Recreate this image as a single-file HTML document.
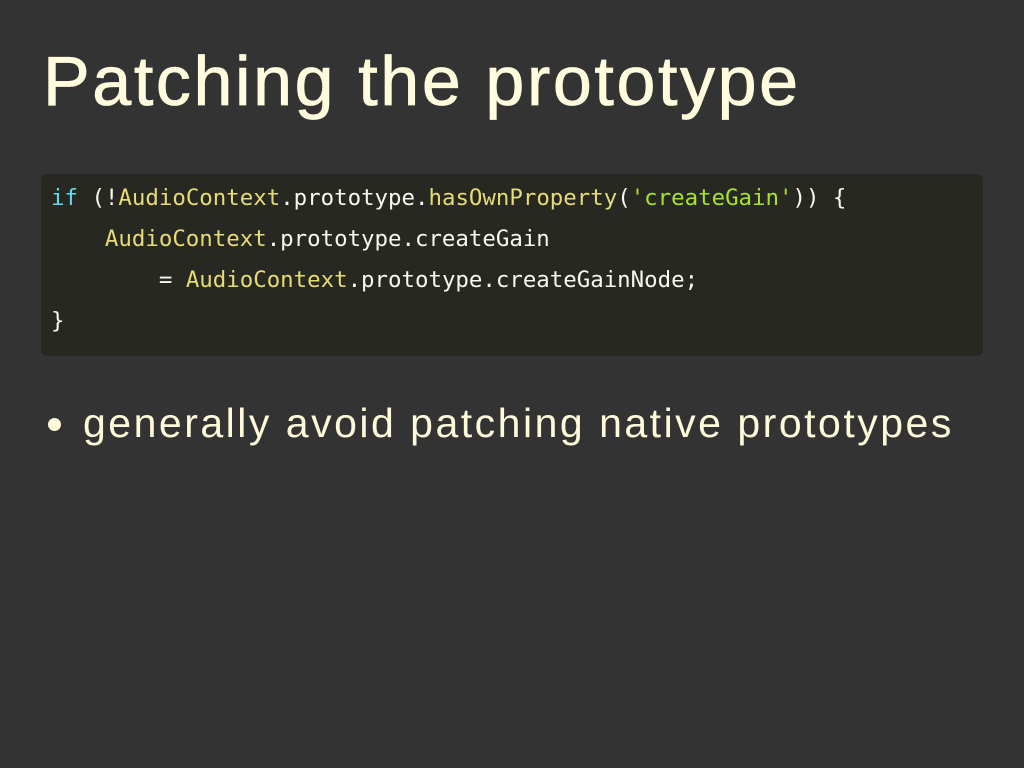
<!DOCTYPE html>
<html><head><style>
html,body{margin:0;padding:0;}
body{width:1024px;height:768px;background:#333333;position:relative;overflow:hidden;font-family:"Liberation Sans",sans-serif;color:#fdf9d9;}
h1{position:absolute;left:43px;top:36px;margin:0;font-size:70px;font-weight:normal;letter-spacing:2.6px;line-height:90px;color:#fffbdc;-webkit-text-stroke:0.8px #fffbdc;}
.code{position:absolute;left:41px;top:174px;width:942px;height:182px;background:#272822;border-radius:6px;}
pre{margin:0;position:absolute;left:10px;top:4px;font-family:"DejaVu Sans Mono","Liberation Mono",monospace;font-size:22.4px;line-height:41px;color:#f8f8f2;}
.k{color:#66d9ef}.y{color:#e6db74}.g{color:#a6e22e}
.b{position:absolute;left:48px;top:398px;font-size:41px;line-height:50px;}
.b span{position:absolute;left:35px;white-space:nowrap;letter-spacing:2.5px;}
.dot{position:absolute;left:0;top:20px;width:13px;height:13px;border-radius:50%;background:#fdf9d9;}
</style></head><body>
<h1>Patching the prototype</h1>
<div class="code"><pre><span class="k">if</span> (!<span class="y">AudioContext</span>.prototype.<span class="y">hasOwnProperty</span>(<span class="g">'createGain'</span>)) {
    <span class="y">AudioContext</span>.prototype.createGain
        = <span class="y">AudioContext</span>.prototype.createGainNode;
}</pre></div>
<div class="b"><div class="dot"></div><span>generally avoid patching native prototypes</span></div>
</body></html>
